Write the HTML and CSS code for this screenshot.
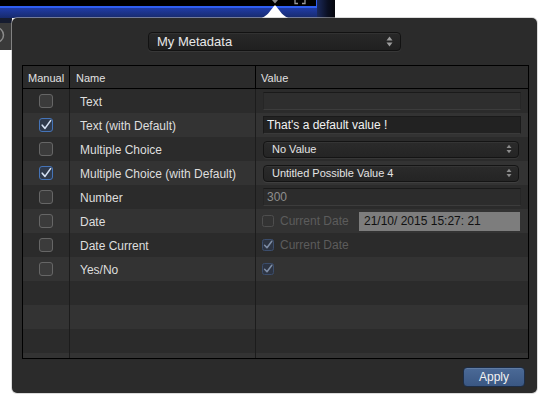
FILE: index.html
```html
<!DOCTYPE html>
<html>
<head>
<meta charset="utf-8">
<link rel="stylesheet" href="styles.css">
</head>
<body>
<div class="desk">
  <div class="bgwin">
    <div class="bgmain">
      <div class="screen">
        <svg class="scr-icon1" width="10" height="5" viewBox="0 0 10 5"><path d="M2 0 L5 3.5 L8 0 Z" fill="#8a8a8a"/></svg>
        <svg class="scr-icon2" width="12" height="5" viewBox="0 0 12 5"><path d="M1 0 V3.5 H4 M11 0 V3.5 H8" stroke="#9a9a9a" stroke-width="1.3" fill="none"/></svg>
      </div>
    </div>
    <div class="bgside"></div>
  </div>
  <div class="sidewin">
    <svg width="12" height="32" viewBox="0 0 12 32"><circle cx="-4" cy="17" r="7.5" stroke="#8c8c8c" stroke-width="1.5" fill="none"/></svg>
  </div>
  <svg class="arrow" width="32" height="14" viewBox="0 0 32 14"><path d="M0 14 C8 12 11 6 15 1 C15.5 0.4 16.5 0.4 17 1 C21 6 24 12 32 14 Z" fill="#ffffff"/></svg>

  <div class="popover">
    <div class="topbar">
      <div class="popup main-popup">
        <span>My Metadata</span>
        <svg class="updown" width="7" height="11" viewBox="0 0 7 11"><path d="M0.5 4.5 L3.5 0.5 L6.5 4.5 Z M0.5 6.5 L3.5 10.5 L6.5 6.5 Z" fill="#9c9c9c"/></svg>
      </div>
    </div>

    <div class="table">
      <div class="thead">
        <div class="c c1 hc">Manual</div>
        <div class="c c2 hc">Name</div>
        <div class="c c3 hc hv">Value</div>
      </div>
      <div class="tbody">
        <div class="row odd">
          <div class="c c1"><span class="cb"></span></div>
          <div class="c c2 name">Text</div>
          <div class="c c3"><div class="field"></div></div>
        </div>
        <div class="row even">
          <div class="c c1"><span class="cb on"><svg width="14" height="14" viewBox="0 0 14 14"><path d="M3.2 7.2 L6 10.4 L11.6 2.6" stroke="#d6e2f4" stroke-width="1.6" fill="none" stroke-linecap="round" stroke-linejoin="round"/></svg></span></div>
          <div class="c c2 name">Text (with Default)</div>
          <div class="c c3"><div class="field filled">That's a default value !</div></div>
        </div>
        <div class="row odd">
          <div class="c c1"><span class="cb"></span></div>
          <div class="c c2 name">Multiple Choice</div>
          <div class="c c3"><div class="popup vpopup"><span>No Value</span><svg class="updown" width="6" height="10" viewBox="0 0 6 10"><path d="M0.5 4 L3 0.8 L5.5 4 Z M0.5 6 L3 9.2 L5.5 6 Z" fill="#8c8c8c"/></svg></div></div>
        </div>
        <div class="row even">
          <div class="c c1"><span class="cb on"><svg width="14" height="14" viewBox="0 0 14 14"><path d="M3.2 7.2 L6 10.4 L11.6 2.6" stroke="#d6e2f4" stroke-width="1.6" fill="none" stroke-linecap="round" stroke-linejoin="round"/></svg></span></div>
          <div class="c c2 name">Multiple Choice (with Default)</div>
          <div class="c c3"><div class="popup vpopup"><span>Untitled Possible Value 4</span><svg class="updown" width="6" height="10" viewBox="0 0 6 10"><path d="M0.5 4 L3 0.8 L5.5 4 Z M0.5 6 L3 9.2 L5.5 6 Z" fill="#8c8c8c"/></svg></div></div>
        </div>
        <div class="row odd">
          <div class="c c1"><span class="cb"></span></div>
          <div class="c c2 name">Number</div>
          <div class="c c3"><div class="field dim">300</div></div>
        </div>
        <div class="row even">
          <div class="c c1"><span class="cb"></span></div>
          <div class="c c2 name">Date</div>
          <div class="c c3 datecell">
            <span class="mini"></span><span class="dlabel">Current Date</span>
            <div class="datefield">21/10/ 2015 15:27: 21</div>
          </div>
        </div>
        <div class="row odd">
          <div class="c c1"><span class="cb"></span></div>
          <div class="c c2 name">Date Current</div>
          <div class="c c3 datecell">
            <span class="mini on"><svg width="12" height="12" viewBox="0 0 12 12"><path d="M2.6 6.2 L5 8.8 L9.8 2.2" stroke="#7f8ea6" stroke-width="1.5" fill="none" stroke-linecap="round" stroke-linejoin="round"/></svg></span><span class="dlabel">Current Date</span>
          </div>
        </div>
        <div class="row even">
          <div class="c c1"><span class="cb"></span></div>
          <div class="c c2 name">Yes/No</div>
          <div class="c c3 datecell">
            <span class="mini on"><svg width="12" height="12" viewBox="0 0 12 12"><path d="M2.6 6.2 L5 8.8 L9.8 2.2" stroke="#7f8ea6" stroke-width="1.5" fill="none" stroke-linecap="round" stroke-linejoin="round"/></svg></span>
          </div>
        </div>
        <div class="row odd"><div class="c c1"></div><div class="c c2"></div><div class="c c3"></div></div>
        <div class="row even"><div class="c c1"></div><div class="c c2"></div><div class="c c3"></div></div>
        <div class="row odd"><div class="c c1"></div><div class="c c2"></div><div class="c c3"></div></div>
        <div class="row even"><div class="c c1"></div><div class="c c2"></div><div class="c c3"></div></div>
      </div>
    </div>

    <div class="footer">
      <button class="apply">Apply</button>
    </div>
  </div>
</div>
</body>
</html>
```

FILE: styles.css
```css
html, body {
  margin: 0;
  padding: 0;
  background: #ffffff;
}
body {
  width: 545px;
  height: 408px;
  overflow: hidden;
  font-family: "Liberation Sans", Arial, sans-serif;
}
.desk {
  position: relative;
  width: 545px;
  height: 408px;
}

/* background window fragments */
.bgwin {
  position: absolute;
  left: 0;
  top: 0;
  width: 335px;
  height: 18px;
  display: flex;
}
.bgmain {
  width: 317px;
  height: 18px;
  background: linear-gradient(to bottom, #2448c8 0px, #1f3aa0 9px, #172a6c 18px);
}
.screen {
  position: relative;
  width: 316px;
  height: 6px;
  background: #000;
  border-right: 1px solid #2f5ff2;
  border-bottom: 2px solid #2f5ff2;
}
.scr-icon1 {
  position: absolute;
  left: 270px;
  top: 0;
}
.scr-icon2 {
  position: absolute;
  left: 294px;
  top: 0;
}
.bgside {
  flex: 1;
  background: linear-gradient(to right, #1b2a5c, #0a0f22 60%, #05060c);
}
.sidewin {
  position: absolute;
  left: 0;
  top: 18px;
  width: 12px;
  height: 32px;
  background: linear-gradient(to bottom, #161c30 0, #161c30 5px, #3a3a3a 5px, #3a3a3a 100%);
}
.sidewin svg {
  display: block;
}
.arrow {
  position: absolute;
  left: 259px;
  top: 5px;
}

/* popover */
.popover {
  position: absolute;
  left: 12px;
  top: 18px;
  width: 525px;
  height: 375px;
  background: #2b2b2b;
  border-radius: 5px;
  box-shadow: 0 0 0 1px rgba(190, 190, 190, 0.55);
  display: flex;
  flex-direction: column;
  box-sizing: border-box;
  padding-top: 14px;
}
.topbar {
  display: flex;
  justify-content: center;
  height: 19px;
}
.popup {
  box-sizing: border-box;
  display: flex;
  align-items: center;
  justify-content: space-between;
  border-radius: 4px;
  border: 1px solid #121212;
  background: linear-gradient(to bottom, #282828, #202020);
  box-shadow: 0 1px 0 rgba(255, 255, 255, 0.06), inset 0 1px 0 rgba(255, 255, 255, 0.05);
  color: #e8e8e8;
}
.main-popup {
  width: 253px;
  height: 19px;
  padding: 0 7px 0 8px;
  font-size: 13px;
}
.updown {
  display: block;
  flex: none;
}

/* table */
.table {
  margin: 14px 8px 0 10px;
  width: 507px;
  height: 294px;
  box-sizing: border-box;
  border: 1px solid #000;
  display: flex;
  flex-direction: column;
  overflow: hidden;
}
.thead {
  display: flex;
  height: 23px;
  flex: none;
  box-sizing: border-box;
  border-bottom: 1px solid #000;
  background: #2b2b2b;
}
.tbody {
  flex: 1;
  overflow: hidden;
}
.row {
  display: flex;
  height: 24px;
}
.row.odd { background: #2b2b2b; }
.row.even { background: #333333; }
.c {
  box-sizing: border-box;
  height: 100%;
  display: flex;
  align-items: center;
}
.c1 {
  width: 47px;
  border-right: 1px solid #1c1c1c;
  justify-content: center;
}
.c2 {
  width: 186px;
  border-right: 1px solid #1c1c1c;
}
.c3 {
  flex: 1;
  padding: 0 7px 0 7px;
}
.thead .c1, .thead .c2 { border-right-color: #000; }
.hc {
  font-size: 11px;
  color: #e2e2e2;
  justify-content: flex-start;
  padding-top: 1px;
}
.thead .c1 { padding-left: 5px; }
.thead .c2 { padding-left: 6px; }
.thead .c3 { padding-left: 5px; }
.name {
  padding-left: 10px;
  padding-top: 1px;
  font-size: 12px;
  color: #dedede;
}

/* checkboxes */
.cb {
  box-sizing: border-box;
  width: 14px;
  height: 14px;
  border-radius: 3px;
  border: 1px solid #666;
  background: #3b3b3b;
  display: block;
  position: relative;
}
.cb.on {
  border-color: #4574b8;
  background: #2f3a4c;
}
.cb svg {
  position: absolute;
  left: -1px;
  top: -1px;
}

/* value fields */
.field {
  box-sizing: border-box;
  width: 100%;
  height: 18px;
  background: #2e2e2e;
  border: 1px solid #262626;
  border-top-color: #1a1a1a;
  border-bottom-color: #3c3c3c;
  font-size: 12px;
  color: #f2f2f2;
  padding-left: 3px;
  line-height: 16px;
}
.field.filled {
  background: #222222;
  border-color: #1a1a1a;
  border-bottom-color: #3a3a3a;
}
.field.dim {
  color: #8e8e8e;
  background: #2c2c2c;
}
.vpopup {
  width: 256px;
  height: 17px;
  padding: 0 6px 0 8px;
  font-size: 11px;
  color: #e4e4e4;
  border-color: #141414;
  background: linear-gradient(to bottom, #2b2b2b, #242424);
}
.datecell {
  padding-left: 6px;
}
.mini {
  box-sizing: border-box;
  display: block;
  position: relative;
  width: 12px;
  height: 12px;
  border-radius: 2.5px;
  border: 1px solid #4e4e4e;
  flex: none;
}
.mini.on {
  border-color: #3b4d6c;
  background: #2d3442;
}
.mini svg {
  position: absolute;
  left: -1px;
  top: -1px;
}
.dlabel {
  margin-left: 6px;
  font-size: 12px;
  color: #5c5c5c;
  width: 79px;
  flex: none;
}
.datefield {
  box-sizing: border-box;
  width: 161px;
  height: 19px;
  background: #7d7d7d;
  color: #111;
  font-size: 12px;
  padding-left: 5px;
  line-height: 19px;
  white-space: nowrap;
}

/* footer */
.footer {
  display: flex;
  justify-content: flex-end;
  padding: 8px 12px 0 0;
}
.apply {
  box-sizing: border-box;
  width: 62px;
  height: 20px;
  border-radius: 4px;
  border: 1px solid #1d2d46;
  background: linear-gradient(to bottom, #4b6a97, #3a5783);
  box-shadow: inset 0 1px 0 rgba(255, 255, 255, 0.12);
  color: #f2f2f2;
  font-family: "Liberation Sans", Arial, sans-serif;
  font-size: 12px;
  padding: 0;
  margin: 0;
}
```
